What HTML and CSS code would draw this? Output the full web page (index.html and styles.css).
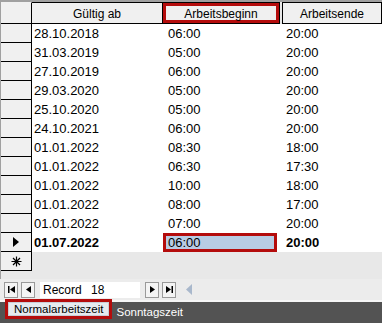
FILE: index.html
```html
<!DOCTYPE html>
<html lang="de">
<head>
  <meta charset="UTF-8" />
  <title>Normalarbeitszeit</title>
  <link rel="stylesheet" href="styles.css">
</head>
<body>
  <div class="sheet">
    <div class="grid">
      <div class="row head">
        <div class="sel"></div>
        <div class="hcell">Gültig ab</div>
        <div class="hcell mark">Arbeitsbeginn</div>
        <div class="hcell last">Arbeitsende</div>
      </div>
      <div class="row"><div class="sel"></div><div class="cell">28.10.2018</div><div class="cell">06:00</div><div class="cell">20:00</div></div>
      <div class="row"><div class="sel"></div><div class="cell">31.03.2019</div><div class="cell">05:00</div><div class="cell">20:00</div></div>
      <div class="row"><div class="sel"></div><div class="cell">27.10.2019</div><div class="cell">06:00</div><div class="cell">20:00</div></div>
      <div class="row"><div class="sel"></div><div class="cell">29.03.2020</div><div class="cell">05:00</div><div class="cell">20:00</div></div>
      <div class="row"><div class="sel"></div><div class="cell">25.10.2020</div><div class="cell">05:00</div><div class="cell">20:00</div></div>
      <div class="row"><div class="sel"></div><div class="cell">24.10.2021</div><div class="cell">06:00</div><div class="cell">20:00</div></div>
      <div class="row"><div class="sel"></div><div class="cell">01.01.2022</div><div class="cell">08:30</div><div class="cell">18:00</div></div>
      <div class="row"><div class="sel"></div><div class="cell">01.01.2022</div><div class="cell">06:30</div><div class="cell">17:30</div></div>
      <div class="row"><div class="sel"></div><div class="cell">01.01.2022</div><div class="cell">10:00</div><div class="cell">18:00</div></div>
      <div class="row"><div class="sel"></div><div class="cell">01.01.2022</div><div class="cell">08:00</div><div class="cell">17:00</div></div>
      <div class="row"><div class="sel"></div><div class="cell">01.01.2022</div><div class="cell">07:00</div><div class="cell">20:00</div></div>
      <div class="row current">
        <div class="sel">
          <svg width="8" height="10" viewBox="0 0 8 10"><path d="M1 0 L7 5 L1 10 Z" fill="#000"/></svg>
        </div>
        <div class="cell">01.07.2022</div>
        <div class="cell edit">06:00</div>
        <div class="cell">20:00</div>
      </div>
      <div class="row newrow">
        <div class="sel">
          <svg width="11" height="11" viewBox="0 0 11 11"><path d="M5.5 0.5 V10.5 M0.5 5.5 H10.5 M2 2 L9 9 M9 2 L2 9" stroke="#000" stroke-width="1.2"/></svg>
        </div>
      </div>
    </div>

    <div class="nav">
      <span class="navbtn">
        <svg width="9" height="9" viewBox="0 0 9 9"><rect x="1" y="1" width="1.5" height="7" fill="#000"/><path d="M8 1 L3 4.5 L8 8 Z" fill="#000"/></svg>
      </span>
      <span class="navbtn">
        <svg width="9" height="9" viewBox="0 0 9 9"><path d="M7 1 L2 4.5 L7 8 Z" fill="#000"/></svg>
      </span>
      <span class="recfield"><span class="reclabel">Record</span><span class="recnum">18</span></span>
      <span class="navbtn">
        <svg width="9" height="9" viewBox="0 0 9 9"><path d="M2 1 L7 4.5 L2 8 Z" fill="#000"/></svg>
      </span>
      <span class="navbtn">
        <svg width="9" height="9" viewBox="0 0 9 9"><path d="M1 1 L6 4.5 L1 8 Z" fill="#000"/><rect x="6.5" y="1" width="1.5" height="7" fill="#000"/></svg>
      </span>
      <span class="scrollarrow">
        <svg width="8" height="11" viewBox="0 0 8 11"><path d="M7 0 L1 5.5 L7 11 Z" fill="#a9b8cc"/></svg>
      </span>
    </div>

    <div class="tabs">
      <span class="tab active">Normalarbeitszeit</span>
      <span class="tab">Sonntagszeit</span>
    </div>
  </div>
</body>
</html>
```

FILE: styles.css
```css
body {
  margin: 0;
  background-color: #e8e8e8;
  font-family: "Liberation Sans", Arial, sans-serif;
  color: #000;
}
.sheet {
  width: 382px;
  height: 323px;
  display: flex;
  flex-direction: column;
}
.grid {
  border-top: 2px solid #a0a0a0;
  border-left: 1px solid #a0a0a0;
  height: 277px;
}
.row {
  display: grid;
  grid-template-columns: 31px 131px 117px 102px;
  height: 19px;
}
.sel {
  background-color: #f0f0f0;
  border-right: 1px solid #000;
  border-bottom: 1px solid #000;
  display: flex;
  align-items: center;
  justify-content: center;
}
.head {
  height: 22px;
}
.hcell {
  background-color: #f0f0f0;
  border-right: 1px solid #000;
  border-bottom: 1px solid #000;
  border-top: 1px solid #000;
  font-size: 12px;
  display: flex;
  align-items: center;
  justify-content: center;
  padding-top: 1px;
}
.head .sel {
  border-top: 1px solid #f0f0f0;
}
.hcell.last {
  border-left: 1px solid #000;
  margin-left: 2px;
}
.mark {
  box-shadow: inset 0 0 0 3px #b40c0c;
}
.cell {
  background-color: #fff;
  font-size: 13px;
  line-height: 19px;
  padding-left: 2px;
  white-space: nowrap;
}
.row .cell:nth-child(3) {
  padding-left: 5px;
}
.row .cell:nth-child(4) {
  padding-left: 6px;
}
.current .cell {
  font-weight: bold;
}
.current .cell.edit {
  font-weight: normal;
  background-color: #b8cce4;
  box-shadow: inset 0 0 0 3px #b40c0c;
  border-right: 3px solid #fff;
}
.newrow .sel {
  height: 18px;
}
.nav {
  display: flex;
  align-items: center;
  height: 21px;
  padding-left: 4px;
  background-color: #ececec;
  border-bottom: 2px solid #f6f6f6;
  gap: 3px;
}
.navbtn {
  width: 12px;
  height: 14px;
  background-color: #f4f4f4;
  border: 1px solid #9a9a9a;
  display: flex;
  align-items: center;
  justify-content: center;
}
.recfield {
  display: flex;
  align-items: center;
  width: 100px;
  height: 16px;
  background-color: #fff;
  font-size: 12px;
  margin: 0 2px;
}
.reclabel {
  padding-left: 3px;
  width: 45px;
}
.recnum {
  padding-left: 3px;
}
.scrollarrow {
  margin-left: 6px;
  display: flex;
}
.tabs {
  display: flex;
  align-items: flex-start;
  height: 21px;
  background-color: #535353;
  padding-left: 5px;
  gap: 4px;
  font-size: 11.5px;
}
.tab {
  color: #fff;
  line-height: 14px;
  margin-top: 3px;
}
.tab.active {
  color: #000;
  background-color: #e6eaee;
  border: 3px solid #b40c0c;
  margin-top: -3px;
  padding: 0 6px;
  box-shadow: inset 0 0 0 1px #c8ced6;
}
```
